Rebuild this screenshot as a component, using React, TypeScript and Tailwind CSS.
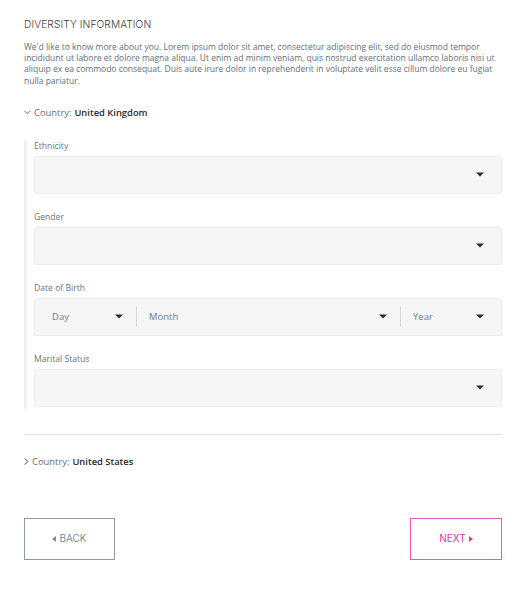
import React from "react";

const Caret = () => (
  <svg width="8" height="5" viewBox="0 0 8 5" className="shrink-0">
    <path d="M0 0.5 L8 0.5 L4 4.5 Z" fill="#2b2b2b" />
  </svg>
);

const Label = ({ children }: { children: React.ReactNode }) => (
  <div className="text-[8.6px] leading-[10px] text-[#6b7378] h-[10px] mb-[5px]">{children}</div>
);

const Field = ({ label }: { label: string }) => (
  <div className="flex flex-col">
    <Label>{label}</Label>
    <div className="h-[38px] rounded-[3px] bg-[#f6f6f6] border border-[#ececec] flex items-center justify-end pr-[17px]">
      <Caret />
    </div>
  </div>
);

export default function App() {
  return (
    <div className="w-[527px] h-[590px] bg-white px-[24px] pt-[18px] pr-[25px]" style={{ fontFamily: '"Open Sans", sans-serif' }}>
      <div className="text-[10.2px] leading-[12px] text-[#3a3a3a] font-light tracking-[0.1px]" style={{ fontFamily: 'Inter, "Open Sans", sans-serif' }}>
        DIVERSITY INFORMATION
      </div>
      <p className="mt-[11px] text-[8.5px] leading-[11.2px] text-[#5f6f7c]">
        We'd like to know more about you. Lorem ipsum dolor sit amet, consectetur adipiscing elit, sed do eiusmod tempor incididunt ut labore et dolore magna aliqua. Ut enim ad minim veniam, quis nostrud exercitation ullamco laboris nisi ut aliquip ex ea commodo consequat. Duis aute irure dolor in reprehenderit in voluptate velit esse cillum dolore eu fugiat nulla pariatur.
      </p>
      <div className="mt-[20px] flex items-center h-[14px] text-[9.4px] text-[#5f6f7c]">
        <svg width="7" height="5" viewBox="0 0 7 5" className="mr-[3px]">
          <path d="M0.5 0.8 L3.5 3.8 L6.5 0.8" fill="none" stroke="#5f6f7c" strokeWidth="1" />
        </svg>
        <span>Country:</span>
        <span className="ml-[3px] font-semibold text-[#2a2a2a]">United Kingdom</span>
      </div>
      <div className="mt-[20px] border-l-[3px] border-[#f1f1f1] pl-[7px] flex flex-col gap-[18px] pt-[1px] pb-[2px]">
        <Field label="Ethnicity" />
        <Field label="Gender" />
        <div className="flex flex-col">
          <Label>Date of Birth</Label>
          <div className="h-[38px] rounded-[3px] bg-[#f6f6f6] border border-[#ececec] flex items-center text-[9.5px] text-[#6f7a82]">
            <div className="w-[101px] flex items-center justify-between pl-[17px] pr-[13px]">
              <span>Day</span>
              <Caret />
            </div>
            <div className="w-px h-[20px] bg-[#d6d9dc]" />
            <div className="flex-1 flex items-center justify-between pl-[12px] pr-[13px]">
              <span>Month</span>
              <Caret />
            </div>
            <div className="w-px h-[20px] bg-[#d6d9dc]" />
            <div className="w-[100px] flex items-center justify-between pl-[12px] pr-[17px]">
              <span>Year</span>
              <Caret />
            </div>
          </div>
        </div>
        <Field label="Marital Status" />
      </div>
      <div className="mt-[25px] h-px bg-[#dedede]" />
      <div className="mt-[20px] flex items-center h-[14px] text-[9.4px] text-[#5f6f7c]">
        <svg width="5" height="7" viewBox="0 0 5 7" className="mr-[3px]">
          <path d="M0.8 0.5 L3.8 3.5 L0.8 6.5" fill="none" stroke="#3a3f44" strokeWidth="1" />
        </svg>
        <span>Country:</span>
        <span className="ml-[3px] font-semibold text-[#2a2a2a]">United States</span>
      </div>
      <div className="mt-[49px] flex justify-between">
        <button className="w-[91px] h-[42px] border border-[#8e9ba5] flex items-center justify-center text-[10px] text-[#7d8b95] gap-[3px]" style={{ fontFamily: 'Inter, sans-serif' }}>
          <svg width="4" height="6" viewBox="0 0 4 6"><path d="M4 0 L4 6 L0 3 Z" fill="#7d8b95" /></svg>
          BACK
        </button>
        <button className="w-[92px] h-[42px] border border-[#e35cb0] flex items-center justify-center text-[10px] text-[#e0389e] gap-[3px]" style={{ fontFamily: 'Inter, sans-serif' }}>
          NEXT
          <svg width="4" height="6" viewBox="0 0 4 6"><path d="M0 0 L0 6 L4 3 Z" fill="#e0389e" /></svg>
        </button>
      </div>
    </div>
  );
}
